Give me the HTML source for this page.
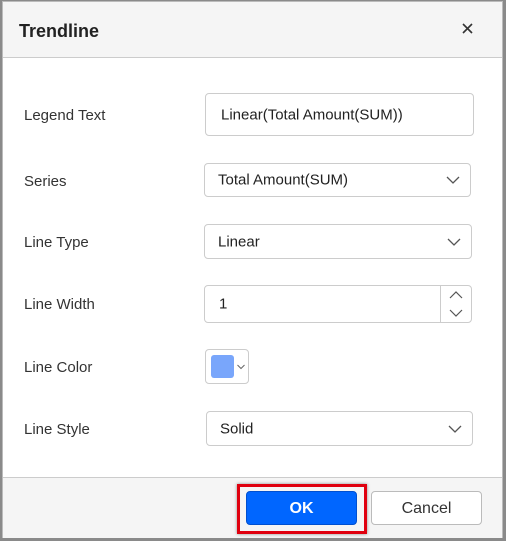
<!DOCTYPE html>
<html><head><style>
*{box-sizing:border-box;margin:0;padding:0}
body{width:506px;height:541px;background:#8a8a8a;font-family:"Liberation Sans",sans-serif;position:relative;overflow:hidden}
.dlg{position:absolute;left:2px;top:1px;width:501px;height:537px;background:#fff;border:1px solid #bbb}
.hd{position:absolute;left:0;top:0;width:100%;height:56px;background:#f5f5f5;border-bottom:1px solid #ccc}
.hd b{position:absolute;left:16px;top:19px;font-size:18px;color:#222}
.x{position:absolute;left:459px;top:21px}
.lbl{position:absolute;left:21px;font-size:15px;color:#333}
.f{position:absolute;border:1px solid #ccc;border-radius:4px;font-size:15px;color:#222;background:#fff}
.f span{position:absolute;left:13px;top:50%;transform:translateY(-50%)}
.f svg{position:absolute;right:10px;top:50%;transform:translateY(-50%)}
.ft{position:absolute;left:0;top:475px;width:100%;height:61px;background:#f5f5f5;border-top:1px solid #ccc}
.btn{position:absolute;top:13px;width:111px;height:34px;border-radius:4px;font-size:16px;font-weight:bold;text-align:center;line-height:34px}
</style></head><body>
<div class="dlg">
<div class="hd"><b>Trendline</b><svg class="x" width="11" height="11"><path d="M1 1l9 9M10 1l-9 9" stroke="#333" stroke-width="1.6"/></svg></div>
<div class="lbl" style="top:105px">Legend Text</div>
<div class="lbl" style="top:171px">Series</div>
<div class="lbl" style="top:232px">Line Type</div>
<div class="lbl" style="top:294px">Line Width</div>
<div class="lbl" style="top:357px">Line Color</div>
<div class="lbl" style="top:419px">Line Style</div>
<div class="f" style="left:202px;top:91px;width:269px;height:43px"><span style="left:15px">Linear(Total Amount(SUM))</span></div>
<div class="f" style="left:201px;top:161px;width:267px;height:34px"><span>Total Amount(SUM)</span><svg width="14" height="8"><path d="M1 1l6 6 6-6" stroke="#555" fill="none" stroke-width="1.3"/></svg></div>
<div class="f" style="left:201px;top:222px;width:268px;height:35px"><span>Linear</span><svg width="14" height="8"><path d="M1 1l6 6 6-6" stroke="#555" fill="none" stroke-width="1.3"/></svg></div>
<div class="f" style="left:201px;top:283px;width:268px;height:38px"><span style="left:14px">1</span><div style="position:absolute;left:235px;top:0;height:36px;border-left:1px solid #ccc"></div><svg width="14" height="26" style="right:8px"><path d="M1 7l6-6 6 6M1 19l6 6 6-6" stroke="#555" fill="none" stroke-width="1.2"/></svg></div>
<div class="f" style="left:202px;top:347px;width:44px;height:35px"><div style="position:absolute;left:5px;top:5px;width:23px;height:23px;background:#79a6fb;border-radius:3px"></div><svg width="8" height="5" style="right:3px"><path d="M0.5 0.5l3.5 3.5 3.5-3.5" stroke="#666" fill="none"/></svg></div>
<div class="f" style="left:203px;top:409px;width:267px;height:35px"><span>Solid</span><svg width="14" height="8"><path d="M1 1l6 6 6-6" stroke="#555" fill="none" stroke-width="1.3"/></svg></div>
<div class="ft">
<div style="position:absolute;left:234px;top:6px;width:130px;height:50px;border:3px solid #e0000f;box-shadow:0 0 3px #888"></div>
<div class="btn" style="left:243px;background:#0066ff;color:#fff;border:1px solid #0050d0">OK</div>
<div class="btn" style="left:368px;background:#fff;color:#333;border:1px solid #bbb;font-weight:normal">Cancel</div>
</div>
</div>
</body></html>
